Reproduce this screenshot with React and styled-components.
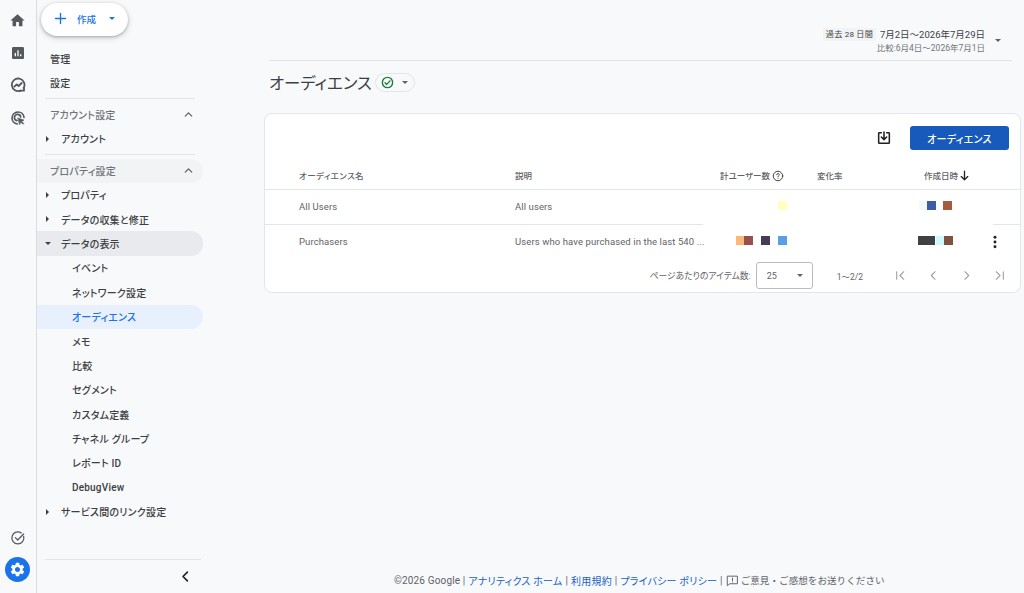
import React from "react";
import styled, { createGlobalStyle } from "styled-components";

const Global = createGlobalStyle`
  html, body { margin: 0; padding: 0; height: 100%; }
  body { background: #f8f9fb; font-family: Roboto, "Noto Sans CJK JP", sans-serif; color: #3c4043; overflow: hidden; }
  #root { height: 593px; }
`;

const Page = styled.div`display: flex; width: 1024px; height: 593px; overflow: hidden;`;
const Rail = styled.nav`
  width: 35px; flex: none; border-right: 1px solid #dadce0; padding: 7px 1px 11px 0;
  display: flex; flex-direction: column; align-items: center;
`;
const RailBtn = styled.div`
  width: 25px; height: 26px; margin-bottom: ${p => p.$gap ?? 6.5}px; display: flex; align-items: center; justify-content: center; flex: none;
  border-radius: 50%; color: #55595e;
`;
const GearBtn = styled.div`
  width: 25px; height: 25px; display: flex; align-items: center; justify-content: center; flex: none;
  border-radius: 50%; color: #fff; background: #1a73e8;
`;
const RailSpacer = styled.div`flex: 1;`;

const Side = styled.aside`
  width: 173px; flex: none; display: flex; flex-direction: column; padding-top: 3px; position: relative;
`;
const CreateBtn = styled.button`
  margin-left: 4px; width: 87px; height: 33px; border: 0; border-radius: 17px; background: #fff;
  box-shadow: 0 1px 3px rgba(60,64,67,.35), 0 2px 6px rgba(60,64,67,.18);
  display: flex; align-items: center; padding: 0 0 2px 12px; color: #1a73e8; font-size: 9.5px; font-weight: 500; font-family: inherit;
`;
const CreateLabel = styled.span`margin: 0 13px 0 9px; white-space: nowrap;`;
const Caret = styled.span`
  width: 0; height: 0; border-left: 3.5px solid transparent; border-right: 3.5px solid transparent;
  border-top: 3.5px solid ${p => p.$color || "#5f6368"}; display: inline-block; flex: none;
`;
const SideCaret = styled.span`
  position: absolute; left: 8px; top: 50%; width: 0; height: 0;
  ${p => p.$open
    ? `margin-top: -2px; border-left: 3px solid transparent; border-right: 3px solid transparent; border-top: 3.5px solid #3c4043;`
    : `margin-top: -3px; margin-left: 1px; border-top: 3px solid transparent; border-bottom: 3px solid transparent; border-left: 3.5px solid #3c4043;`}
`;
const TopLinks = styled.div`margin-top: 10px; display: flex; flex-direction: column;`;
const Row = styled.div`
  position: relative; height: ${p => p.$h || 24.36}px; display: flex; align-items: center; width: 166px; box-sizing: border-box; flex: none;
  padding-left: ${p => p.$indent}px; font-size: 10px; font-weight: 500; white-space: nowrap;
  font-feature-settings: "palt"; letter-spacing: .2px;
  color: ${p => p.$selected ? "#1a73e8" : p.$muted ? "#70757a" : "#3c4043"};
  background: ${p => p.$selected ? "#e8f0fe" : p.$tone === "strong" ? "#e8eaed" : p.$tone === "soft" ? "#f1f3f4" : "transparent"};
  border-radius: ${p => p.$selected || p.$tone ? "0 12px 12px 0" : "0"};
`;
const Collapse = styled.span`position: absolute; right: 8px; top: 5px; color: #5f6368; display: flex;`;
const Divider = styled.div`height: 1px; background: #e3e5e8; margin: ${p => p.$m || "3.5px 8px 3.5px 8px"}; width: ${p => p.$w || 150}px; flex: none;`;
const SideBottom = styled.div`margin-top: auto;`;
const CollapseBtn = styled.div`height: 33px; display: flex; justify-content: flex-end; align-items: center; padding-right: 17px; color: #202124;`;

const Main = styled.main`flex: 1; min-width: 0; display: flex; flex-direction: column;`;
const DateBar = styled.header`
  margin: 0 12px 0 59px; height: 61px; box-sizing: border-box; border-bottom: 1px solid #dfe1e5;
  display: flex; justify-content: flex-end; align-items: flex-start; padding-top: 27px; position: relative;
`;
const DateCol = styled.div`display: flex; flex-direction: column; align-items: flex-end; margin-right: 27px;`;
const DateTop = styled.div`display: flex; align-items: center; gap: 4px; height: 14px; font-size: 9.5px; white-space: nowrap;`;
const Chip = styled.span`background: #f1f3f4; font-size: 8.1px; padding: 1px 3px; color: #3c4043; line-height: 11px; letter-spacing: .2px;`;
const DateSub = styled.div`font-size: 8.5px; color: #70757a; margin-top: 1px; line-height: 13px; white-space: nowrap;`;
const DateCaret = styled.span`position: absolute; right: 11px; top: 39px; display: flex;`;

const TitleRow = styled.div`display: flex; align-items: center; margin: 8px 0 0 59px; height: 26px; gap: 3px;`;
const Title = styled.h1`margin: 0; font-size: 16.4px; font-weight: 400; color: #3c4043; font-feature-settings: "palt"; white-space: nowrap;`;
const StatusPill = styled.div`
  width: 40px; height: 19px; box-sizing: border-box; border: 1px solid #e3e5e8; border-radius: 10px;
  display: flex; align-items: center; padding-left: 5px; gap: 8px; color: #188038;
`;

const Card = styled.section`
  margin: 18px 3px 0 54px; height: 180px; box-sizing: border-box; background: #fff; border: 1px solid #e3e5e8; border-radius: 8px;
  display: flex; flex-direction: column;
`;
const CardTools = styled.div`height: 46px; flex: none; display: flex; justify-content: flex-end; align-items: flex-start; padding: 12px 11px 0 0; box-sizing: border-box; gap: 14px;`;
const IconBtn = styled.div`width: 24px; height: 24px; display: flex; align-items: center; justify-content: center; color: #202124;`;
const PrimaryBtn = styled.button`
  width: 99px; height: 24px; background: #185abc; color: #fff; border: 0; border-radius: 3px;
  font-size: 10px; font-weight: 500; font-feature-settings: "palt"; letter-spacing: .3px; font-family: inherit;
`;
const Table = styled.div`display: grid; grid-template-columns: 250px 188px 114px 107px 69px 27px; flex: none;`;
const Head = styled.div`
  height: 30px; box-sizing: border-box; border-bottom: 1px solid #e3e5e8; display: flex; align-items: center; gap: 3px; padding-left: ${p => p.$pl ?? 0}px;
  font-size: 8.5px; color: #5f6368; font-weight: 500; white-space: nowrap; font-feature-settings: "palt"; letter-spacing: ${p => p.$ls || 0}px;
`;
const HeadIcon = styled.span`display: flex; color: ${p => p.$c}; margin: 2px 0 0 ${p => p.$ml}px;`;
const Cell = styled.div`
  height: 35px; box-sizing: border-box; display: flex; align-items: center; padding: 0 0 2px ${p => p.$pl ?? 0}px;
  border-bottom: 1px solid ${p => p.$line ? "#e3e5e8" : "transparent"};
  font-size: 9.5px; color: #5f6368; white-space: nowrap; letter-spacing: .1px;
`;
const Pixels = styled.div`
  display: flex; height: 9px; flex: none; margin: -2px 0 0 ${p => p.$ml ?? 0}px;
`;
const Pixel = styled.span`width: ${p => p.$w}px; height: 9px; margin-left: ${p => p.$gap || 0}px; background: ${p => p.$c}; flex: none;`;
const ActionDots = styled.div`color: #202124; display: flex; margin: 2px 0 0 -6px;`;

const Pager = styled.div`
  display: flex; align-items: center; height: 31px; justify-content: flex-end; padding-right: 14px;
  font-size: 8.8px; color: #5f6368; font-feature-settings: "palt";
`;
const PerPage = styled.span`margin-right: 5px; white-space: nowrap;`;
const Select = styled.div`
  width: 57px; height: 27px; box-sizing: border-box; border: 1px solid #b9bcc1; border-radius: 3px; display: flex; align-items: center;
  justify-content: space-between; padding: 0 9px 0 10px; font-size: 9px; color: #5f6368;
`;
const Range = styled.span`margin: 0 31px 0 24px; font-size: 8.5px; white-space: nowrap; color: #5f6368;`;
const PagerIcons = styled.div`display: flex; gap: 20px; color: #9aa0a6;`;

const Footer = styled.footer`
  margin-top: auto; height: 26px; display: flex; align-items: center; padding-left: 184px; font-size: 10px; color: #5f6368; gap: 3px; white-space: nowrap;
  font-feature-settings: "palt"; letter-spacing: .15px;
`;
const FootLink = styled.span`color: #1a5fc4; letter-spacing: .2px;`;
const FootIcon = styled.span`display: flex;`;
const FeedbackText = styled.span`margin-left: -1px; font-size: 9.6px; font-feature-settings: normal; letter-spacing: 0;`;

const Ic = ({ s = 16, children, fill = "currentColor" }) => (
  <svg width={s} height={s} viewBox="0 0 24 24" fill={fill}>{children}</svg>
);
const Stroke = ({ s = 16, w = 2, children }) => (
  <svg width={s} height={s} viewBox="0 0 24 24" fill="none" stroke="currentColor" strokeWidth={w} strokeLinecap="round" strokeLinejoin="round">{children}</svg>
);
const Up = () => <Stroke s={13} w={2.4}><path d="M6 15l6-6 6 6" /></Stroke>;

function SideRow({ open, closed, children, ...rest }) {
  return (
    <Row {...rest}>
      {open && <SideCaret $open />}
      {closed && <SideCaret />}
      {children}
    </Row>
  );
}

const sub = ["イベント", "ネットワーク設定", "オーディエンス", "メモ", "比較", "セグメント", "カスタム定義", "チャネル グループ", "レポート ID", "DebugView"];

export default function App() {
  return (
    <Page>
      <Global />
      <Rail>
        <RailBtn><Ic s={17}><path d="M10 20v-6h4v6h5v-8h3L12 3 2 12h3v8z" /></Ic></RailBtn>
        <RailBtn><Ic s={16}><path d="M19 3H5c-1.1 0-2 .9-2 2v14c0 1.1.9 2 2 2h14c1.1 0 2-.9 2-2V5c0-1.1-.9-2-2-2zM9 17H7v-5h2v5zm4 0h-2V8h2v9zm4 0h-2v-3h2v3z" /></Ic></RailBtn>
        <RailBtn><Stroke w={2.7}><path d="M20.5 16.5A9.5 9.5 0 1 0 16 20.5" /><path d="M16 20.5h5v-4" /><path d="M6.5 14.5l3.5-3.5 3 2.5 4.5-4.5" /></Stroke></RailBtn>
        <RailBtn><Stroke w={2.5}><path d="M11 21a9 9 0 1 1 10-10" /><path d="M10.5 16a4.7 4.7 0 1 1 5.5-5.5" /><path d="M12 12l9 3.2-3.6 1.6 3.2 3.4-1.2 1.2-3.2-3.4-1.6 3.6z" fill="currentColor" strokeWidth="1" /></Stroke></RailBtn>
        <RailSpacer />
        <RailBtn $gap={6}><Stroke w={1.9}><path d="M20.5 9.5A9 9 0 1 1 17 4.5" /><path d="M8 11.5l3.5 3.5 9-9" /></Stroke></RailBtn>
        <GearBtn><Ic s={17}><path d="M19.14 12.94c.04-.3.06-.61.06-.94 0-.32-.02-.64-.07-.94l2.03-1.58c.18-.14.23-.41.12-.61l-1.92-3.32c-.12-.22-.37-.29-.59-.22l-2.39.96c-.5-.38-1.03-.7-1.62-.94l-.36-2.54c-.04-.24-.24-.41-.48-.41h-3.84c-.24 0-.43.17-.47.41l-.36 2.54c-.59.24-1.13.57-1.62.94l-2.39-.96c-.22-.08-.47 0-.59.22L2.74 8.87c-.12.21-.08.47.12.61l2.03 1.58c-.05.3-.09.63-.09.94s.02.64.07.94l-2.03 1.58c-.18.14-.23.41-.12.61l1.92 3.32c.12.22.37.29.59.22l2.39-.96c.5.38 1.03.7 1.62.94l.36 2.54c.05.24.24.41.48.41h3.84c.24 0 .44-.17.47-.41l.36-2.54c.59-.24 1.13-.56 1.62-.94l2.39.96c.22.08.47 0 .59-.22l1.92-3.32c.12-.22.07-.47-.12-.61l-2.01-1.58zM12 15.6c-1.98 0-3.6-1.62-3.6-3.6s1.62-3.6 3.6-3.6 3.6 1.62 3.6 3.6-1.62 3.6-3.6 3.6z" /></Ic></GearBtn>
      </Rail>
      <Side>
        <CreateBtn>
          <Stroke s={15} w={2.2}><path d="M12 4v16M4 12h16" /></Stroke>
          <CreateLabel>作成</CreateLabel>
          <Caret $color="#1a73e8" />
        </CreateBtn>
        <TopLinks>
          <SideRow $indent={13}>管理</SideRow>
          <SideRow $indent={13}>設定</SideRow>
        </TopLinks>
        <Divider />
        <SideRow $indent={13} $muted $h={24}>アカウント設定<Collapse><Up /></Collapse></SideRow>
        <SideRow $indent={24} closed $h={24}>アカウント</SideRow>
        <Divider />
        <SideRow $indent={13} $muted $tone="soft" $h={24}>プロパティ設定<Collapse><Up /></Collapse></SideRow>
        <SideRow $indent={24} closed>プロパティ</SideRow>
        <SideRow $indent={24} closed>データの収集と修正</SideRow>
        <SideRow $indent={24} open $tone="strong">データの表示</SideRow>
        {sub.map(t => <SideRow key={t} $indent={35} $selected={t === "オーディエンス"}>{t}</SideRow>)}
        <SideRow $indent={24} closed>サービス間のリンク設定</SideRow>
        <SideBottom>
          <Divider $w={156} $m="0 0 0 8px" />
          <CollapseBtn><Stroke s={15} w={2.6}><path d="M15 5l-7 7 7 7" /></Stroke></CollapseBtn>
        </SideBottom>
      </Side>
      <Main>
        <DateBar>
          <DateCol>
            <DateTop><Chip>過去 28 日間</Chip><span>7月2日～2026年7月29日</span></DateTop>
            <DateSub>比較:6月4日～2026年7月1日</DateSub>
          </DateCol>
          <DateCaret><Caret /></DateCaret>
        </DateBar>
        <TitleRow>
          <Title>オーディエンス</Title>
          <StatusPill>
            <Stroke s={13} w={2.6}><circle cx="12" cy="12" r="9.5" /><path d="M7.5 12.5l3 3 6-6.5" /></Stroke>
            <Caret />
          </StatusPill>
        </TitleRow>
        <Card>
          <CardTools>
            <IconBtn><Stroke s={16} w={2.3}><path d="M8 4H5a1 1 0 0 0-1 1v14a1 1 0 0 0 1 1h14a1 1 0 0 0 1-1V5a1 1 0 0 0-1-1h-3" /><path d="M12 3v11M8 10.5l4 4 4-4" /></Stroke></IconBtn>
            <PrimaryBtn>オーディエンス</PrimaryBtn>
          </CardTools>
          <Table>
            <Head $pl={34} $ls={.4}>オーディエンス名</Head>
            <Head>説明</Head>
            <Head $pl={17}>計ユーザー数 <HeadIcon $c="#3c4043" $ml={-1.5}><Stroke s={12} w={2}><circle cx="12" cy="12" r="9.5" /><path d="M9.5 9.5a2.5 2.5 0 1 1 3.5 2.3c-.7.4-1 .9-1 1.7" /><path d="M12 17h.01" /></Stroke></HeadIcon></Head>
            <Head>変化率</Head>
            <Head>作成日時 <HeadIcon $c="#202124" $ml={-3}><Stroke s={13} w={2.4}><path d="M12 4v16M6 14l6 6 6-6" /></Stroke></HeadIcon></Head>
            <Head />

            <Cell $line $pl={34}>All Users</Cell>
            <Cell $line>All users</Cell>
            <Cell><Pixels $ml={75}><Pixel $w={9} $c="#ffffc2" /></Pixels></Cell>
            <Cell />
            <Cell><Pixels $ml={-5}><Pixel $w={8} $c="#f6f8f7" /><Pixel $w={9} $c="#3b5fa6" /><Pixel $w={9} $gap={7} $c="#a55c3c" /></Pixels></Cell>
            <Cell $line />

            <Cell $pl={34}>Purchasers</Cell>
            <Cell>Users who have purchased in the last 540 ...</Cell>
            <Cell><Pixels $ml={33}><Pixel $w={8} $c="#fdb877" /><Pixel $w={9} $c="#97514c" /><Pixel $w={9} $gap={8} $c="#453d58" /><Pixel $w={9} $gap={8} $c="#5a9fe4" /></Pixels></Cell>
            <Cell />
            <Cell><Pixels $ml={-6}><Pixel $w={17} $c="#3f4143" /><Pixel $w={8} $gap={1} $c="#ccfafa" /><Pixel $w={9} $c="#7d5340" /></Pixels></Cell>
            <Cell><ActionDots><Ic s={16}><circle cx="12" cy="5" r="2.2" /><circle cx="12" cy="12" r="2.2" /><circle cx="12" cy="19" r="2.2" /></Ic></ActionDots></Cell>
          </Table>
          <Pager>
            <PerPage>ページあたりのアイテム数:</PerPage>
            <Select>25<Caret /></Select>
            <Range>1～2/2</Range>
            <PagerIcons>
              <Stroke s={13} w={2}><path d="M5 5v14M18 5l-7 7 7 7" /></Stroke>
              <Stroke s={13} w={2}><path d="M15 5l-7 7 7 7" /></Stroke>
              <Stroke s={13} w={2}><path d="M9 5l7 7-7 7" /></Stroke>
              <Stroke s={13} w={2}><path d="M6 5l7 7-7 7M19 5v14" /></Stroke>
            </PagerIcons>
          </Pager>
        </Card>
        <Footer>
          <span>©2026 Google |</span><FootLink>アナリティクス ホーム</FootLink><span>|</span><FootLink>利用規約</FootLink><span>|</span><FootLink>プライバシー ポリシー</FootLink><span>|</span>
          <FootIcon><Stroke s={13} w={1.8}><path d="M3 4h18v14H7l-4 3z" /><path d="M12 7.5v5M12 15h.01" /></Stroke></FootIcon>
          <FeedbackText>ご意見・ご感想をお送りください</FeedbackText>
        </Footer>
      </Main>
    </Page>
  );
}
